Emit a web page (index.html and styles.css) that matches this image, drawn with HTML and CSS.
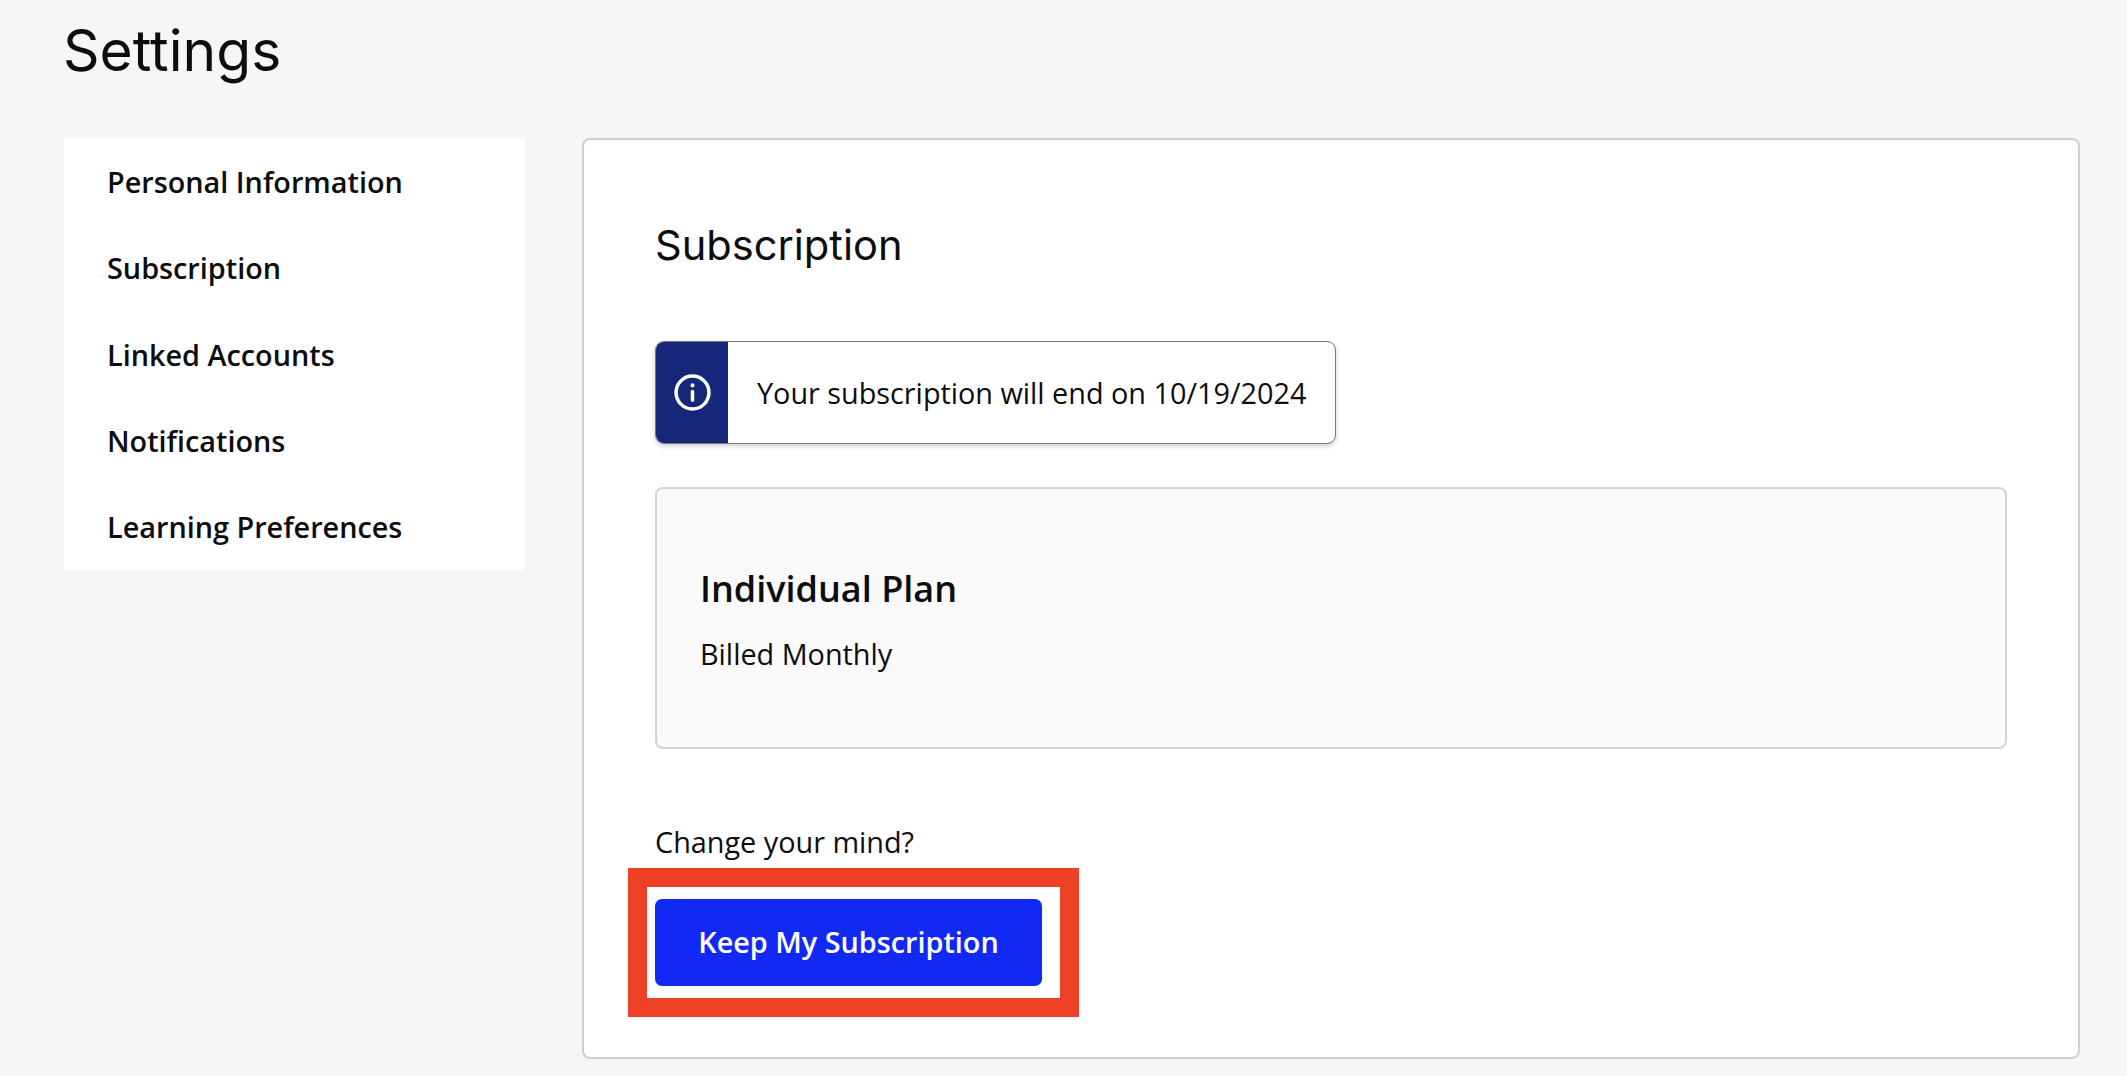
FILE: index.html
```html
<!DOCTYPE html>
<html lang="en">
<head>
<meta charset="utf-8">
<title>Settings</title>
<link rel="stylesheet" href="styles.css">
</head>
<body>
<div class="page">
  <h1 class="page-title">Settings</h1>
  <div class="layout">
    <nav class="side-nav">
      <a class="nav-item">Personal Information</a>
      <a class="nav-item">Subscription</a>
      <a class="nav-item">Linked Accounts</a>
      <a class="nav-item">Notifications</a>
      <a class="nav-item">Learning Preferences</a>
    </nav>
    <main class="card">
      <h2 class="card-title">Subscription</h2>
      <div class="alert">
        <div class="alert-icon">
          <svg class="info-icon" viewBox="0 0 36 36" fill="none" stroke="#fff" stroke-width="3.4" stroke-linecap="round">
            <circle cx="18" cy="18" r="16"/>
            <path d="M18 17v8.5"/>
            <path d="M18 10.8v.4" stroke-width="3.8"/>
          </svg>
        </div>
        <p class="alert-text">Your subscription will end on 10/19/2024</p>
      </div>
      <section class="plan">
        <h3 class="plan-name">Individual Plan</h3>
        <p class="plan-billing">Billed Monthly</p>
      </section>
      <p class="change-text">Change your mind?</p>
      <div class="action">
        <button class="primary-btn">Keep My Subscription</button>
      </div>
    </main>
  </div>
</div>
</body>
</html>
```
FILE: styles.css
```css
* { box-sizing: border-box; }
html, body { margin: 0; height: 100%; }
body {
  background: #f6f6f6;
  color: #0d0d0d;
  font-family: "Open Sans", "Noto Sans", sans-serif;
  overflow: hidden;
}
.page { padding: 0 47px 17px 64px; }
.page-title {
  margin: 0 0 0 -1px;
  height: 138px;
  padding-top: 17px;
  font: 400 57px/68px "Inter", "Liberation Sans", sans-serif;
}
.layout { display: flex; align-items: flex-start; gap: 57px; }
.side-nav {
  width: 461px;
  flex: none;
  background: #fff;
  display: flex;
  flex-direction: column;
  padding-top: 0.2px;
}
.nav-item {
  height: 86.4px;
  padding-left: 43px;
  display: flex;
  align-items: center;
  font-size: 28.8px;
  font-weight: 600;
}
.card {
  flex: 1;
  height: 921px;
  background: #fff;
  border: 2px solid #cfcfcf;
  border-radius: 8px;
  padding: 0 71px;
}
.card-title {
  margin: 0;
  padding-top: 79px;
  height: 201px;
  font: 400 41.6px/52px "Inter", "Liberation Sans", sans-serif;
}
.alert {
  width: 681px;
  height: 103px;
  display: flex;
  align-items: stretch;
  background: #fff;
  border: 1px solid #7a7a7a;
  border-radius: 9px;
  box-shadow: 0 2px 5px rgba(0,0,0,.2);
  overflow: hidden;
}
.alert-icon {
  width: 72px;
  background: #16277a;
  display: flex;
  align-items: center;
  justify-content: center;
}
.info-icon { width: 37px; height: 37px; }
.alert-text {
  margin: 0;
  padding-left: 29px;
  align-self: center;
  font-size: 28.8px;
  line-height: 40px;
}
.plan {
  margin-top: 43px;
  height: 262px;
  background: #fafafa;
  border: 2px solid #d4d4d4;
  border-radius: 8px;
  padding: 75px 43px 0;
}
.plan-name { margin: 0; font-size: 36px; line-height: 50px; font-weight: 600; }
.plan-billing { margin: 20px 0 0; font-size: 28.8px; line-height: 40px; }
.change-text { margin: 73px 0 0; font-size: 28.8px; line-height: 40px; }
.action { position: relative; margin-top: 37px; width: 387px; height: 87px; }
.action::before {
  content: "";
  box-sizing: border-box;
  position: absolute;
  left: -27px;
  top: -31px;
  width: 451px;
  height: 149px;
  border: 19px solid #ee4027;
  pointer-events: none;
}
.primary-btn {
  width: 100%;
  height: 100%;
  border: 0;
  border-radius: 7px;
  background: #1229f5;
  color: #fff;
  font: 600 28.8px/40px "Open Sans", "Noto Sans", sans-serif;
  padding: 0 0 2px;
}
```
